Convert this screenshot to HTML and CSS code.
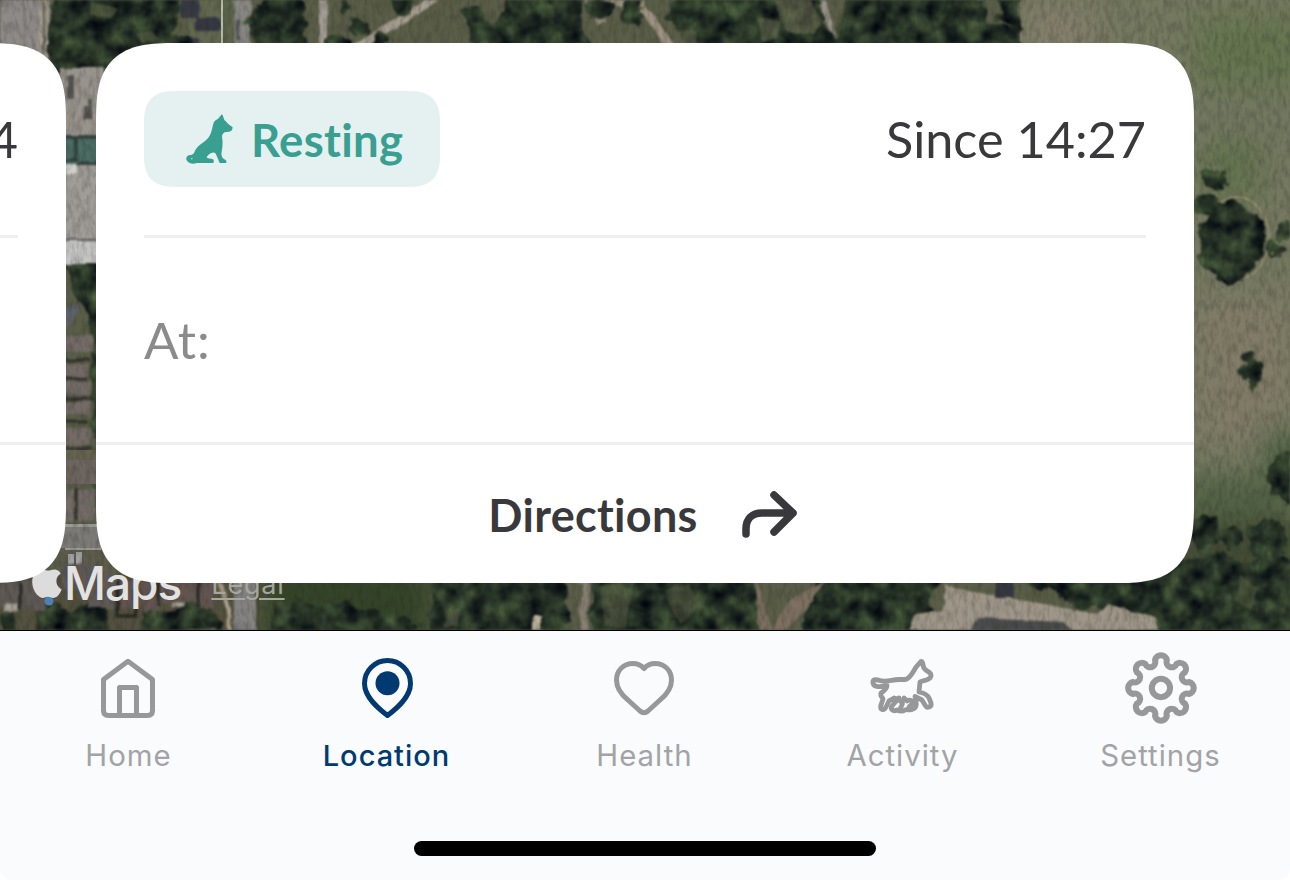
FILE: index.html
```html
<!DOCTYPE html>
<html lang="en">
<head>
  <meta charset="UTF-8" />
  <meta name="viewport" content="width=device-width, initial-scale=1.0" />
  <title>Location</title>
  <link rel="stylesheet" href="styles.css">
</head>
<body>
  <div class="screen">
    <main class="map">
      <svg class="terrain" viewBox="0 0 1290 630" aria-hidden="true">
        <defs>
          <filter id="foliage" x="0" y="0" width="1290" height="630" filterUnits="userSpaceOnUse" color-interpolation-filters="sRGB">
            <feTurbulence type="fractalNoise" baseFrequency="0.055" numOctaves="4" seed="8" result="n" />
            <feDisplacementMap in="SourceGraphic" in2="n" scale="20" xChannelSelector="R" yChannelSelector="G" result="shape" />
            <feColorMatrix in="n" values="0.44 0 0 0 -0.07  0.54 0 0 0 -0.07  0.28 0 0 0 0.01  0 0 0 0 1" result="leaf" />
            <feComposite in="leaf" in2="shape" operator="in" />
            <feGaussianBlur stdDeviation="0.8" />
          </filter>
          <filter id="rough" x="0" y="0" width="1290" height="630" filterUnits="userSpaceOnUse" color-interpolation-filters="sRGB">
            <feTurbulence type="fractalNoise" baseFrequency="0.05" numOctaves="2" seed="3" result="n" />
            <feDisplacementMap in="SourceGraphic" in2="n" scale="5" xChannelSelector="R" yChannelSelector="G" />
            <feGaussianBlur stdDeviation="0.8" />
          </filter>
          <filter id="soft" x="-30%" y="-30%" width="160%" height="160%" color-interpolation-filters="sRGB"><feGaussianBlur stdDeviation="14" /></filter>
          <filter id="grain" x="0" y="0" width="100%" height="100%" color-interpolation-filters="sRGB">
            <feTurbulence type="fractalNoise" baseFrequency="0.22 0.09" numOctaves="3" seed="5" />
            <feColorMatrix values="0 0 0 0 0.12  0 0 0 0 0.12  0 0 0 0 0.1  1.2 0 0 0 -0.45" />
          </filter>
        </defs>

        <rect width="1290" height="630" fill="#5a5e48" />

        <!-- field on the right -->
        <rect x="1020" width="270" height="520" fill="#757960" />
        <g filter="url(#soft)">
          <rect x="1195" y="15" width="110" height="75" fill="#667550" />
          <rect x="1025" y="0" width="70" height="60" fill="#837f6b" />
          <rect x="1190" y="90" width="110" height="60" fill="#727860" />
          <rect x="1205" y="140" width="55" height="60" fill="#64734f" />
          <rect x="1190" y="295" width="110" height="150" fill="#807c67" />
          <rect x="1180" y="475" width="120" height="50" fill="#536345" />
          <rect x="1265" y="430" width="40" height="50" fill="#4f6343" />
          <rect x="1180" y="522" width="120" height="120" fill="#444c35" />
        </g>
        <ellipse cx="1237" cy="238" rx="32" ry="41" fill="none" stroke="#858466" stroke-width="3" />

        <!-- ground below the cards -->
        <rect y="575" width="260" height="55" fill="#54513f" />
        <g filter="url(#soft)">
          <rect x="262" y="560" width="170" height="90" fill="#344428" />
        </g>

        <!-- pavement and roads, top left -->
        <g filter="url(#rough)">
          <rect x="-10" y="-10" width="54" height="66" fill="#8e8a88" />
          <rect x="39" y="-10" width="11" height="70" fill="#a39c8f" />
          <path d="M44 0V55" stroke="#5c5a50" stroke-width="2" />
          <rect x="188" y="-10" width="34" height="65" fill="#626850" />
          <path d="M181-2h18v20h-18zM196 18h24v13h-24zM181 38h18v10h-18z" fill="#363943" />
          <rect x="225" y="-10" width="9" height="60" fill="#5b654a" />
          <rect x="234" y="-10" width="17" height="60" fill="#878682" />
          <path d="M236 20h4v20h-4z" fill="#505458" />
          <rect x="319" y="-10" width="8" height="60" fill="#a69f99" />
          <path d="M352 51 436-2" stroke="#a8a092" stroke-width="8" />
          <path d="M585-5 602 23M605 2H645M643 8 677 55" stroke="#9d9382" stroke-width="8" fill="none" />
          <path d="M823 0 832 36M980-5v24l12 32" stroke="#989389" stroke-width="6" fill="none" />
        </g>
        <path d="M222 0v50" stroke="#b9c3ae" stroke-width="2" />

        <g filter="url(#foliage)">
          <path d="M55-10H182L176 32 190 42 190 56 135 50 112 92 66 90 44 50z" />
          <ellipse cx="278" cy="25" rx="28" ry="33" />
          <ellipse cx="345" cy="5" rx="5" ry="7" />
          <ellipse cx="358" cy="27" rx="9" ry="9" />
          <ellipse cx="378" cy="37" rx="9" ry="9" />
          <ellipse cx="402" cy="3" rx="12" ry="12" />
          <ellipse cx="335" cy="44" rx="12" ry="7" />
          <path d="M462 10 478 6 495 25 508-10H582V20L597 60H485L470 40z" />
          <ellipse cx="600" cy="8" rx="12" ry="11" />
          <ellipse cx="632" cy="12" rx="12" ry="15" />
          <path d="M663 18 680-10H820L826 28 838 40 850-10H985L984 18 1020 30 1022 60H700L692 48z" />
          <path d="M996-10H1024L1018 30 998 20z" />
          <ellipse cx="1214" cy="178" rx="12" ry="10" />
          <ellipse cx="1207" cy="203" rx="12" ry="9" />
          <ellipse cx="1230" cy="240" rx="32" ry="40" />
          <ellipse cx="1275" cy="246" rx="10" ry="8" />
          <ellipse cx="1289" cy="229" rx="13" ry="9" />
          <ellipse cx="1248" cy="358" rx="9" ry="7" />
          <ellipse cx="1247" cy="376" rx="10" ry="8" />
          <path d="M1250 355 1262 362 1256 393 1248 385z" />
          <ellipse cx="1291" cy="478" rx="24" ry="26" />
          <ellipse cx="1203" cy="534" rx="18" ry="16" />
          <ellipse cx="1230" cy="536" rx="13" ry="11" />
          <ellipse cx="1268" cy="541" rx="20" ry="22" />
          <path d="M1185 556 1225 550 1245 562 1300 560V650H1155L1110 600 1120 575z" />
          <path d="M64 258H110V320L103 350 91 330 75 300z" />
          <path d="M90 315H110V555L98 540 95 470z" />
          <path d="M0 613 14 610 18 640H0zM38 610 55 602 71 613 83 602 105 608 112 640H35z" />
          <path d="M142 610 172 611 190 602 215 606 222 640H142z" />
          <path d="M266 640 275 606 295 600 318 608 345 600 365 612 398 610 425 640z" />
          <path d="M436 570H562L570 640H428L432 600z" />
          <path d="M588 615 596 570H758L762 640H598z" />
          <path d="M820 570H940L928 610 905 640H795z" />
          <path d="M1000 570H1180L1170 600 1140 614 1080 608z" />
        </g>

        <!-- clearings between the trees -->
        <g filter="url(#rough)" opacity="0.5">
          <path d="M92 2 118 8 110 18 90 15zM135 35 150 32 160 40 142 42z" fill="#6a6e4d" />
          <path d="M774 0 808-5 822 20 815 34 785 30z" fill="#7c7a5c" />
          <path d="M680 30 696 32 697 50H684zM757 18 780 22 778 38 762 42z" fill="#737459" />
          <path d="M600 588 620 580 632 600 625 628 605 626zM665 590 690 584 700 605 680 625z" fill="#61634a" />
          <path d="M446 612 460 608 458 626H444z" fill="#686850" />
          <path d="M1240 575 1258 588 1250 610 1235 600z" fill="#5d6445" />
        </g>

        <!-- strip seen between the two cards -->
        <g filter="url(#rough)">
          <rect x="60" y="68" width="45" height="57" fill="#98938d" />
          <path d="M67 75h7v24h-7zM83 107h8v14h-8zM88 99h4v8h-4z" fill="#555452" />
          <path d="M60 136h45v28H60z" fill="#4a6d64" />
          <path d="M60 137h45M75 137v22M60 160h18M78 164h25" stroke="#2f3c3a" stroke-width="3" />
          <rect x="60" y="120" width="45" height="15" fill="#98938d" />
          <rect x="60" y="166" width="45" height="75" fill="#a09c97" />
          <rect x="60" y="164" width="16" height="9" fill="#cfcfcb" />
          <rect x="60" y="240" width="45" height="24" fill="#c4c4c3" />
          <path d="M60 240h38" stroke="#5c5b59" stroke-width="2" />
          <path d="M64 328 66 308 83 304 70 324z" fill="#5f646b" />
          <path d="M60 336H93V352H60zM60 364h28v13H60zM60 382h32v13H60zM60 402h30v12H60zM60 429h30v16H60zM60 490h14v32H60zM78 490h17v31H78z" fill="#746b67" />
          <path d="M60 360H90M60 379H88M60 399H94M60 422H88M60 448H92M76 488V520" stroke="#302e2c" stroke-width="3" />
        </g>
        <path d="M60 450h36v10H60z" fill="#666250" />
        <path d="M60 460h36v24H60z" fill="#6d6560" />
        <path d="M60 526h42v22H60z" fill="#7c7b78" />
        <path d="M60 524h42v3H60zM65 548h36v2H65z" fill="#9c9b94" />
        <path d="M60 550h50v15H60z" fill="#5e5c4c" />
        <path d="M68 554h6v11H68zM76 552h6v13H76z" fill="#a0a3a3" />

        <!-- houses along the bottom -->
        <g filter="url(#rough)">
          <path d="M0 580H19V608H0zM22 580H45V610H22zM62 564H100L118 580V608H88V590H62z" fill="#5e5955" />
          <path d="M120 582H140V607H120zM142 582H158V611H142zM160 580H196V602H160zM199 580H214V607H199z" fill="#625551" />
          <path d="M20 583V610M49 583V606M118 580V616H136V590M158 580V605M198 580V607" stroke="#252622" stroke-width="3" fill="none" />
          <path d="M5 605H18V612H5zM172 603H184V606H172zM172 630H216" fill="#aaa69c" stroke="#aaa69c" />
          <path d="M216 575 229 610 230 640" fill="none" stroke="#aaa18a" stroke-width="4" />
          <rect x="234" y="570" width="22" height="70" fill="#858382" />
          <path d="M562 575 588 582 583 608 586 640" fill="none" stroke="#8a8174" stroke-width="7" />
          <path d="M534 616h7v20h-7z" fill="#bbb19c" />
          <path d="M755 575 760 640 785 630 803 612 828 578 788 602 771 630z" fill="#7d7061" />
          <path d="M945 583 963 590 1055 606 1095 614 1108 603 1155 618 1163 640H905L915 615 943 612z" fill="#9e9688" />
          <path d="M978 618 1063 622 1085 640H966z" fill="#4b4c4d" />
          <path d="M995 577H1014V598H995z" fill="#34373f" />
        </g>
        <rect width="1290" height="630" filter="url(#grain)" opacity="0.4" />
        <circle cx="49" cy="601" r="4.5" fill="#4d80b4" />
      </svg>

      <div class="attribution">
        <svg class="apple" viewBox="0 0 30 38" aria-hidden="true">
          <path d="M27 13c-3 2-4 4-4 7 0 4 2 6 5 8-2 5-5 8-8 8-2 0-3-1-5-1s-3 1-5 1C5 36 0 28 0 21c0-7 4-12 9-12 3 0 4 1 6 1s4-1 6-1c2 0 5 1 6 4z" />
        </svg>
        <span class="maps">Maps</span>
        <span class="legal">Legal</span>
      </div>

      <div class="cards">
        <section class="card">
          <div class="card-body">
            <div class="card-head"><span class="since">Since 14:24</span></div>
            <div class="address"></div>
          </div>
          <div class="directions"></div>
        </section>

        <section class="card">
          <div class="card-body">
            <div class="card-head">
              <div class="status">
                <svg class="dog" viewBox="140 85 140 150" aria-hidden="true">
                  <path d="M247 86C252 91 252 98 255 104C261 107 264 115 271 119L279 124C280 131 276 137 268 138L255 140C249 144 247 149 248 157C251 173 248 187 246 202C245 211 249 219 257 222C262 225 262 230 259 232H242C238 231 238 227 237 223L229 205C224 197 217 200 207 207L202 213C201 219 206 218 216 219C223 220 225 226 221 232H179C174 232 173 231 169 233C158 237 145 231 141 223C138 214 145 207 155 208C163 207 164 201 167 194C173 182 184 175 194 168C205 160 212 151 216 137L221 116C223 106 229 103 235 100Z" />
                  <circle cx="157" cy="219" r="2" fill="#e5f1f0" />
                </svg>
                <span>Resting</span>
              </div>
              <span class="since">Since 14:27</span>
            </div>
            <div class="address">At:</div>
          </div>
          <div class="directions">
            <span>Directions</span>
            <svg class="arrow" viewBox="0 0 56 48" aria-hidden="true">
              <path d="M4 43V38C4 28 10 22 20 22H51M32 4L51 22L32 41" />
            </svg>
          </div>
        </section>
      </div>
    </main>

    <nav class="tabbar">
      <a class="tab">
        <svg class="icon" viewBox="0 0 76 76" aria-hidden="true">
          <path d="M13.5 29.5 38 11.2 62.5 29.5V60.5Q62.5 65.5 57.5 65.5H18.5Q13.5 65.5 13.5 60.5ZM29.5 65V37.5H46.5V65" />
        </svg>
        <span>Home</span>
      </a>
      <a class="tab active">
        <svg class="icon" viewBox="0 0 76 76" aria-hidden="true">
          <path d="M39.5 65.5C31 59 16.5 47.5 16.5 33.5A23 23 0 0 1 62.5 33.5C62.5 47.5 48 59 39.5 65.5Z" />
          <circle class="fill" cx="39.5" cy="33.2" r="12" />
        </svg>
        <span>Location</span>
      </a>
      <a class="tab">
        <svg class="icon" viewBox="0 0 76 76" aria-hidden="true">
          <path d="M38 18.5C34 14 31 13.5 27 13.5C17 13.5 10.5 21 10.5 30C10.5 40 17 46 22 50L34 61Q38 64.5 42 61L54 50C59 46 65.5 40 65.5 30C65.5 21 59 13.5 49 13.5C45 13.5 42 14 38 18.5Z" />
        </svg>
        <span>Health</span>
      </a>
      <a class="tab">
        <svg class="icon dog-run" viewBox="0 0 76 76" aria-hidden="true">
          <path d="M9 33C8 28 14 30 18 31C25 32 28 29.5 35 29.5H41C47 29 50 19 53 16L56 12.5C58 9.5 59 13 59.500 17C61 22 68 21 67 26C66 31 58 30 56 32L55 42C60 43 63 44 65 48L67 53C68 57 63 59 61 55L58 50C56 49 54 48 51 46.5C52 51 54 57 49 59C46 61 43 59 41 60C38 62 35 61 33 60C29 62 26 59 28 56L34 49L30 48C28 50 26 50 25 51L22 57C20 61 15 60 17 55L19 49C18 46 16 47 17 43C20 41 23 39 23 35.5C17 37 10 38 9 33Z" />
          <path d="M35 48C35 53 40 51 38 55L36 59M40 48 43 51C46 49 50 51 48 54L45 57" />
        </svg>
        <span>Activity</span>
      </a>
      <a class="tab">
        <svg class="icon gear" viewBox="-37.5 -36.6 73.2 73.2" aria-hidden="true">
          <path d="M-5.7-26.9A5.8 5.8 0 0 1 5.7-26.9A5 5 0 0 0 15-23.1A5.8 5.8 0 0 1 23.1-15A5 5 0 0 0 26.9-5.7A5.8 5.8 0 0 1 26.9 5.7A5 5 0 0 0 23.1 15A5.8 5.8 0 0 1 15 23.1A5 5 0 0 0 5.7 26.9A5.8 5.8 0 0 1-5.7 26.9A5 5 0 0 0-15 23.1A5.8 5.8 0 0 1-23.1 15A5 5 0 0 0-26.9 5.7A5.8 5.8 0 0 1-26.9-5.7A5 5 0 0 0-23.1-15A5.8 5.8 0 0 1-15-23.1A5 5 0 0 0-5.7-26.9Z" />
          <circle r="8.8" />
        </svg>
        <span>Settings</span>
      </a>
    </nav>
    <div class="home-bar"></div>
  </div>
</body>
</html>
```

FILE: styles.css
```css
:root {
  --text: #39393b;
  --muted: #8b8b8b;
  --line: #efefef;
  --teal: #389f91;
  --teal-bg: #e5f1f0;
  --navy: #003a70;
}

* {
  box-sizing: border-box;
}

body {
  margin: 0;
  background: #fff;
  font-family: Lato, "Open Sans", sans-serif;
  font-variant-ligatures: none;
  color: var(--text);
}

.screen {
  width: 1290px;
  height: 880px;
  overflow: hidden;
  display: flex;
  flex-direction: column;
  background: #f9fbfd;
  border-radius: 0 0 12px 12px;
}

.map {
  position: relative;
  height: 631px;
  flex: none;
  overflow: hidden;
  border-bottom: 1px solid #000;
}

.terrain {
  display: block;
  width: 1290px;
  height: 630px;
}

/* attribution sits on the map, partly under the cards */
.attribution {
  position: absolute;
  left: 32px;
  top: 560px;
  display: flex;
  align-items: flex-start;
  font-family: Inter, "Liberation Sans", sans-serif;
  color: #e2e2e2;
}

.apple {
  width: 32px;
  height: 40px;
  fill: #dcdcdc;
}

.maps {
  font-size: 46px;
  line-height: 46px;
  font-weight: 450;
  letter-spacing: -1px;
}

.legal {
  margin-left: 30px;
  font-size: 27px;
  line-height: 50px;
  letter-spacing: 0.8px;
  color: #a4a69f;
  text-decoration: underline;
  text-decoration-thickness: 2px;
  text-underline-offset: 4px;
}

.cards {
  position: absolute;
  top: 43px;
  left: -1032px;
  display: flex;
  gap: 30px;
}

.card {
  width: 1098px;
  height: 540px;
  display: flex;
  flex-direction: column;
  background: #fff;
  border-radius: 56px;
}

@supports (corner-shape: superellipse(1.6)) {
  .card {
    border-radius: 80px;
    corner-shape: superellipse(1.55);
  }

  .card .status {
    border-radius: 32px;
    corner-shape: superellipse(1.4);
  }
}

.card-body {
  height: 399px;
  padding: 48px 48px 0;
}

.card-head {
  height: 147px;
  display: flex;
  align-items: flex-start;
  justify-content: space-between;
  border-bottom: 3px solid var(--line);
}

.status {
  width: 296px;
  height: 96px;
  padding-left: 42px;
  display: flex;
  align-items: center;
  gap: 18px;
  border-radius: 24px;
  background: var(--teal-bg);
  color: var(--teal);
  font-size: 45.5px;
  font-weight: 700;
  letter-spacing: 0.3px;
}

.dog {
  width: 47px;
  height: 50px;
  fill: currentColor;
}

.since {
  margin-left: auto;
  font-size: 50.4px;
  line-height: 96px;
}

.address {
  padding-top: 67px;
  font-size: 51px;
  line-height: 70px;
  letter-spacing: 0.8px;
  color: var(--muted);
}

.directions {
  flex: 1;
  display: flex;
  align-items: center;
  justify-content: center;
  gap: 44px;
  padding: 1px 4px 0 0;
  border-top: 3px solid var(--line);
  font-size: 45px;
  font-weight: 700;
  letter-spacing: 0.3px;
}

.arrow {
  width: 56px;
  height: 48px;
  fill: none;
  stroke: currentColor;
  stroke-width: 7.5;
  stroke-linecap: round;
  stroke-linejoin: round;
}

.tabbar {
  display: flex;
  height: 210px;
  padding-top: 19px;
}

.tab {
  width: 258px;
  display: flex;
  flex-direction: column;
  align-items: center;
  margin-left: -1px;
  margin-right: 1px;
  color: #a2a3a5;
  font-family: Inter, "Liberation Sans", sans-serif;
  font-size: 29.4px;
  line-height: 40px;
  letter-spacing: 1px;
}

.tab span {
  margin-top: 10px;
  padding-left: 1px;
}

.tab.active {
  color: var(--navy);
  font-size: 29px;
  font-weight: 500;
}

.icon {
  width: 76px;
  height: 76px;
  fill: none;
  stroke: #97989a;
  stroke-width: 5;
  stroke-linejoin: round;
  stroke-linecap: round;
}

.active .icon {
  stroke: currentColor;
}

.icon .fill {
  fill: currentColor;
  stroke: none;
}

.gear {
  stroke-width: 5.8;
}

.dog-run {
  stroke-width: 4.8;
}

.home-bar {
  width: 462px;
  height: 15px;
  margin: 0 auto;
  border-radius: 8px;
  background: #000;
}
```
